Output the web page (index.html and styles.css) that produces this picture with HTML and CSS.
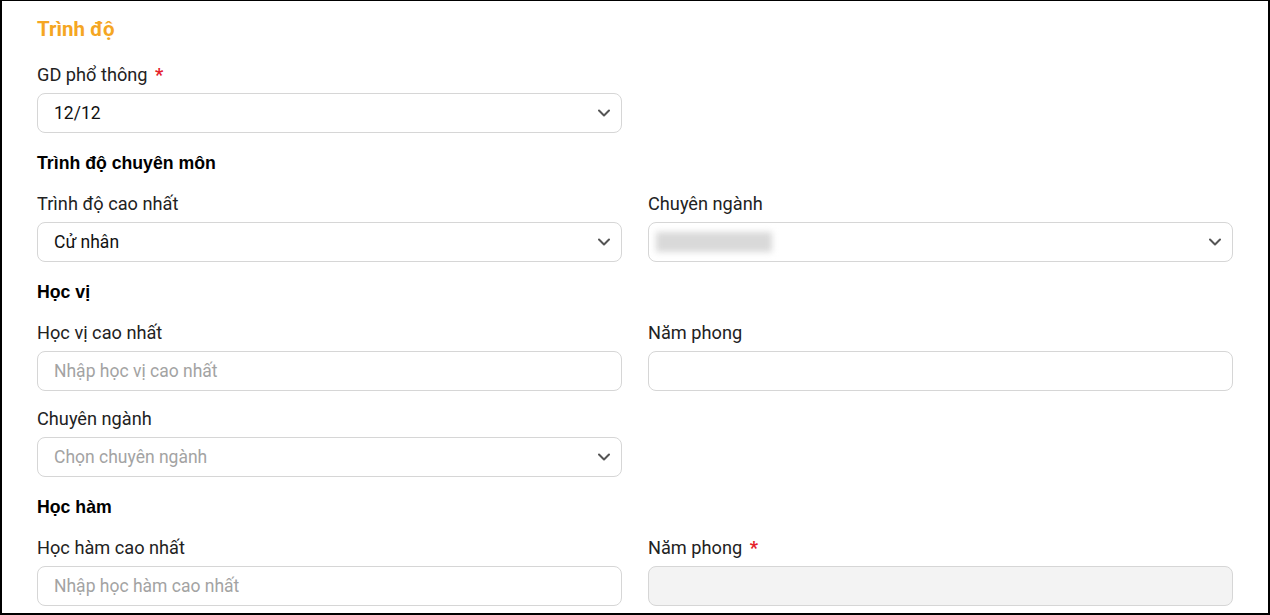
FILE: index.html
```html
<!DOCTYPE html>
<html lang="vi">
<head>
<meta charset="utf-8" />
<title>Trình độ</title>
<link rel="stylesheet" href="styles.css">
</head>
<body>
	<div class="panel">
		<h2 class="panel-title">Trình độ</h2>

		<div class="grid first">
			<div class="field">
				<label class="label">GD phổ thông <span class="req">*</span></label>
				<div class="control select">
					<span class="value">12/12</span>
					<svg class="chev" viewBox="0 0 12 8" width="12" height="8"><path d="M1 1.5 L6 6.5 L11 1.5" /></svg>
				</div>
			</div>
		</div>

		<h3 class="sub-title">Trình độ chuyên môn</h3>
		<div class="grid">
			<div class="field">
				<label class="label">Trình độ cao nhất</label>
				<div class="control select">
					<span class="value">Cử nhân</span>
					<svg class="chev" viewBox="0 0 12 8" width="12" height="8"><path d="M1 1.5 L6 6.5 L11 1.5" /></svg>
				</div>
			</div>
			<div class="field">
				<label class="label">Chuyên ngành</label>
				<div class="control select">
					<span class="hidden-value"></span>
					<svg class="chev" viewBox="0 0 12 8" width="12" height="8"><path d="M1 1.5 L6 6.5 L11 1.5" /></svg>
				</div>
			</div>
		</div>

		<h3 class="sub-title">Học vị</h3>
		<div class="grid">
			<div class="field">
				<label class="label">Học vị cao nhất</label>
				<div class="control"><span class="placeholder">Nhập học vị cao nhất</span></div>
			</div>
			<div class="field">
				<label class="label">Năm phong</label>
				<div class="control"></div>
			</div>
			<div class="field">
				<label class="label">Chuyên ngành</label>
				<div class="control select">
					<span class="placeholder">Chọn chuyên ngành</span>
					<svg class="chev" viewBox="0 0 12 8" width="12" height="8"><path d="M1 1.5 L6 6.5 L11 1.5" /></svg>
				</div>
			</div>
		</div>

		<h3 class="sub-title">Học hàm</h3>
		<div class="grid">
			<div class="field">
				<label class="label">Học hàm cao nhất</label>
				<div class="control"><span class="placeholder">Nhập học hàm cao nhất</span></div>
			</div>
			<div class="field">
				<label class="label">Năm phong <span class="req">*</span></label>
				<div class="control disabled"></div>
			</div>
		</div>
	</div>
</body>
</html>
```

FILE: styles.css
```css
html, body, h2, h3 {margin:0; padding:0;}
body {background:#fff; font-family:Roboto, "Noto Sans", Arial, sans-serif; color:#222;}

.panel {width:1270px; height:615px; box-sizing:border-box; overflow:hidden; border:2px solid #000; border-top-width:1px; padding:16px 35px 0 35px; background:#fff;}
.panel-title {font-size:20.5px; line-height:24px; font-weight:bold; color:#f5a623; margin-bottom:22px;}

.grid {display:grid; grid-template-columns:1fr 1fr; column-gap:26px; row-gap:16px;}
.sub-title {font-family:"Liberation Sans", Arial, sans-serif; font-size:17.7px; line-height:24px; font-weight:bold; color:#000; margin:18px 0 17px;}

.field {display:flex; flex-direction:column;}
.label {font-size:18.2px; line-height:24px; color:#222; margin-bottom:6px;}
.req {color:#e5212b; font-weight:bold; margin-left:3px;}

.control {height:40px; box-sizing:border-box; border:1px solid #d6d6d6; border-radius:8px; padding:0 16px; display:flex; align-items:center; font-size:17.5px; background:#fff;}
.control.disabled {background:#f3f3f3;}
.select {justify-content:space-between; padding-right:11px;}
.value {color:#111;}
.placeholder {color:#a3a3a3;}
.chev {fill:none; stroke:#555; stroke-width:2; stroke-linecap:round; stroke-linejoin:round;}
.hidden-value {display:block; width:116px; height:20px; margin-left:-9px; background:#d9d9d9; filter:blur(3px);}
```
